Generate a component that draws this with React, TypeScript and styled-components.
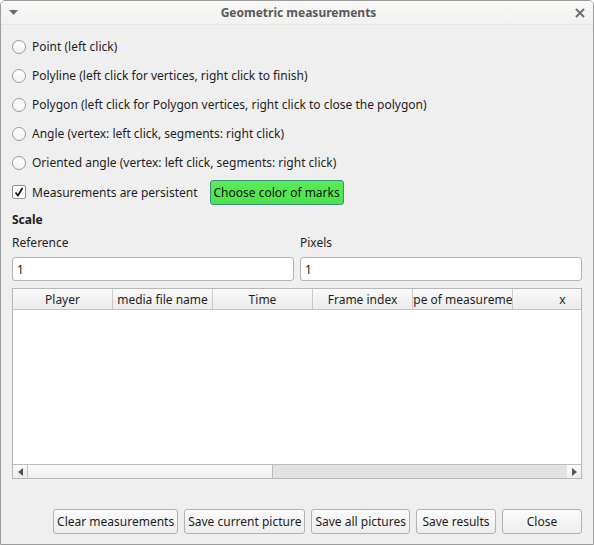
import React from 'react';
import styled, { createGlobalStyle } from 'styled-components';

const GlobalStyle = createGlobalStyle`
  html, body {
    margin: 0;
    padding: 0;
    background: #ffffff;
  }
  * {
    box-sizing: border-box;
  }
`;

const Window = styled.div`
  width: 594px;
  height: 545px;
  border: 1px solid #9c9c9c;
  border-radius: 5px 5px 0 0;
  background: #efefef;
  display: flex;
  flex-direction: column;
  overflow: hidden;
  font-family: 'Noto Sans', 'Open Sans', sans-serif;
  font-size: 12px;
  color: #1e1e1e;
`;

const TitleBar = styled.div`
  height: 24px;
  flex: none;
  display: flex;
  align-items: center;
  justify-content: space-between;
  padding: 0 8px 0 8px;
  background: linear-gradient(#f8f8f6, #f2f2f0);
  border-bottom: 1px solid #e6e6e4;
`;

const TitleText = styled.div`
  font-weight: bold;
  font-size: 12px;
  color: #5a5a5a;
  margin-left: 4px;
`;

const Content = styled.div`
  flex: 1;
  display: flex;
  flex-direction: column;
  padding: 0 11px;
`;

const OptionRow = styled.label<{ $h: number; $top?: number }>`
  height: ${(p) => p.$h}px;
  margin-top: ${(p) => p.$top ?? 0}px;
  display: flex;
  align-items: center;
  gap: 6px;
  flex: none;
`;

const Radio = styled.span`
  width: 14px;
  height: 14px;
  border-radius: 50%;
  border: 1px solid #9a9a9a;
  background: linear-gradient(#ffffff, #f3f3f3);
  flex: none;
`;

const CheckBox = styled.span`
  width: 14px;
  height: 14px;
  border: 1px solid #8e8e8e;
  border-radius: 2px;
  background: #ffffff;
  display: flex;
  align-items: center;
  justify-content: center;
  flex: none;
`;

const ColorButton = styled.button`
  height: 25px;
  margin-left: 6px;
  padding: 0 3px;
  border: 1px solid #3f8c7e;
  border-radius: 3px;
  background: linear-gradient(#58ec58, #4be34b);
  font: inherit;
  color: #111;
`;

const SectionTitle = styled.div`
  height: 24px;
  display: flex;
  align-items: center;
  font-weight: bold;
  flex: none;
`;

const ScaleGrid = styled.div`
  display: grid;
  grid-template-columns: 1fr 1fr;
  column-gap: 6px;
  flex: none;
`;

const FieldLabel = styled.div`
  height: 23px;
  display: flex;
  align-items: center;
`;

const Field = styled.div`
  height: 24px;
  margin-top: 3px;
  border: 1px solid #b4b4b4;
  border-radius: 3px;
  background: #ffffff;
  display: flex;
  align-items: center;
  padding-left: 4px;
  color: #2a1a0a;
`;

const Table = styled.div`
  margin-top: 7px;
  height: 191px;
  border: 1px solid #b8b8b8;
  background: #ffffff;
  display: flex;
  flex-direction: column;
  overflow: hidden;
  flex: none;
`;

const HeaderRow = styled.div`
  height: 21px;
  display: flex;
  flex: none;
  background: linear-gradient(#fafafa, #ececec);
  border-bottom: 1px solid #c6c6c6;
`;

const HeaderCell = styled.div`
  width: 100px;
  flex: none;
  display: flex;
  align-items: center;
  justify-content: center;
  white-space: nowrap;
  overflow: hidden;
  border-right: 1px solid #cacaca;
`;

const TableBody = styled.div`
  flex: 1;
`;

const ScrollBar = styled.div`
  height: 14px;
  flex: none;
  display: flex;
  border-top: 1px solid #bcbcbc;
  background: #e2e2e2;
`;

const ScrollArrow = styled.div`
  width: 14px;
  flex: none;
  display: flex;
  align-items: center;
  justify-content: center;
  background: linear-gradient(#fafafa, #ececec);
`;

const ScrollHandle = styled.div`
  width: 246px;
  flex: none;
  background: linear-gradient(#fbfbfb, #eeeeee);
  border-left: 1px solid #c4c4c4;
  border-right: 1px solid #b8b8b8;
`;

const ScrollTrack = styled.div`
  flex: 1;
`;

const ButtonBar = styled.div`
  margin-top: auto;
  margin-bottom: 10px;
  display: flex;
  justify-content: flex-end;
  gap: 6px;
`;

const PushButton = styled.button`
  height: 25px;
  min-width: 80px;
  padding: 0 3px;
  border: 1px solid #b2b2b2;
  border-radius: 3px;
  background: linear-gradient(#fcfcfc, #ededed);
  font: inherit;
  color: #1e1e1e;
`;

const options = [
  'Point (left click)',
  'Polyline (left click for vertices, right click to finish)',
  'Polygon (left click for Polygon vertices, right click to close the polygon)',
  'Angle (vertex: left click, segments: right click)',
  'Oriented angle (vertex: left click, segments: right click)',
];

const columns = ['Player', 'media file name', 'Time', 'Frame index', 'Type of measurement', 'x'];

const buttons = ['Clear measurements', 'Save current picture', 'Save all pictures', 'Save results', 'Close'];

const App = () => {
  return (
    <>
      <GlobalStyle />
      <Window>
        <TitleBar>
          <svg width="9" height="6" viewBox="0 0 9 6">
            <path d="M0 0 L9 0 L4.5 5 Z" fill="#6b6b6b" />
          </svg>
          <TitleText>Geometric measurements</TitleText>
          <svg width="10" height="10" viewBox="0 0 10 10">
            <path d="M1 1 L9 9 M9 1 L1 9" stroke="#707070" strokeWidth="2" />
          </svg>
        </TitleBar>
        <Content>
          {options.map((o, i) => (
            <OptionRow key={o} $h={29} $top={i === 0 ? 7 : 0}>
              <Radio />
              {o}
            </OptionRow>
          ))}
          <OptionRow $h={30}>
            <CheckBox>
              <svg width="10" height="10" viewBox="0 0 10 10">
                <path d="M1.5 5.5 L4 8.5 L8.5 1" stroke="#111" strokeWidth="1.7" fill="none" />
              </svg>
            </CheckBox>
            Measurements are persistent
            <ColorButton>Choose color of marks</ColorButton>
          </OptionRow>
          <SectionTitle>Scale</SectionTitle>
          <ScaleGrid>
            <FieldLabel>Reference</FieldLabel>
            <FieldLabel>Pixels</FieldLabel>
            <Field>1</Field>
            <Field>1</Field>
          </ScaleGrid>
          <Table>
            <HeaderRow>
              {columns.map((c) => (
                <HeaderCell key={c}>{c}</HeaderCell>
              ))}
            </HeaderRow>
            <TableBody />
            <ScrollBar>
              <ScrollArrow>
                <svg width="5" height="8" viewBox="0 0 5 8">
                  <path d="M5 0 L0 4 L5 8 Z" fill="#555" />
                </svg>
              </ScrollArrow>
              <ScrollHandle />
              <ScrollTrack />
              <ScrollArrow>
                <svg width="5" height="8" viewBox="0 0 5 8">
                  <path d="M0 0 L5 4 L0 8 Z" fill="#555" />
                </svg>
              </ScrollArrow>
            </ScrollBar>
          </Table>
          <ButtonBar>
            {buttons.map((b) => (
              <PushButton key={b}>{b}</PushButton>
            ))}
          </ButtonBar>
        </Content>
      </Window>
    </>
  );
};

export default App;
